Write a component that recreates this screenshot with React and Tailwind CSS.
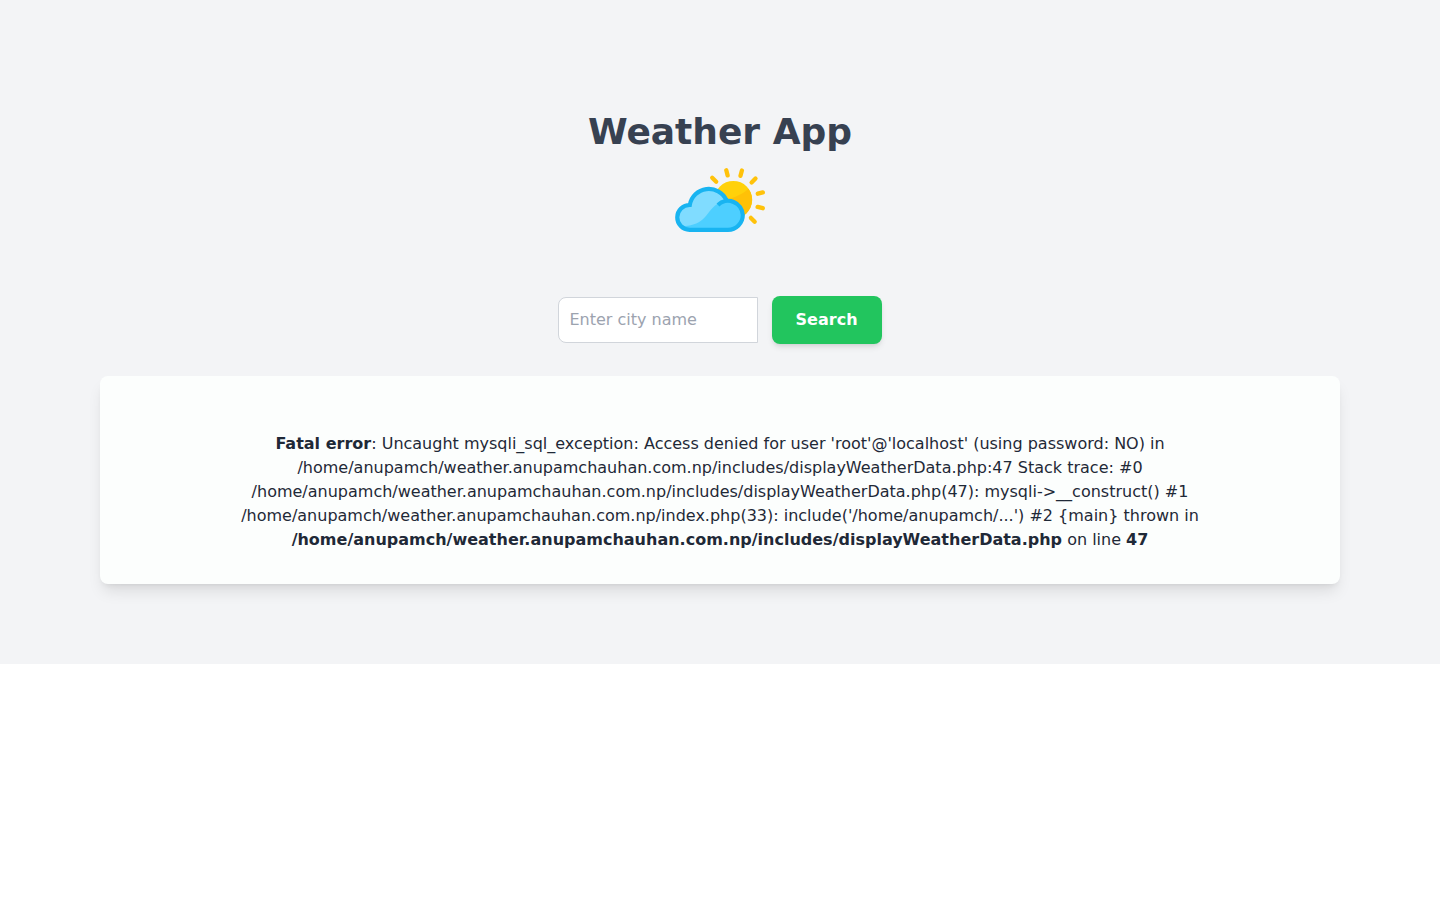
function WeatherIcon() {
  return (
    <svg
      className="w-[90px] h-16"
      viewBox="0 0 90 64"
      fill="none"
      role="img"
      aria-label="Partly cloudy"
    >
      <g stroke="#ffc20a" strokeWidth="4.3" strokeLinecap="round">
        <path d="M37.2 9.8 41.2 13.7" />
        <path d="M51.3 2.3 52.6 7.4" />
        <path d="M66.9 2.5 65.5 7.8" />
        <path d="M80.5 10.6 76.6 14.5" />
        <path d="M87.8 24.4 82.8 25.7" />
        <path d="M87.8 40.2 82.6 38.9" />
        <path d="M79.7 53.8 75.9 49.9" />
      </g>
      <circle cx="58.3" cy="31.8" r="18.9" fill="#ffd10a" />
      <path
        d="M73.5 20.7 Q67 27 54 31 L54 48 L67 48.5 A18.9 18.9 0 0 0 73.5 20.7Z"
        fill="#ffc107"
      />
      <path
        d="M14.5 61.8 A12.4 12.4 0 0 1 14.8 37 A19.3 19.3 0 0 1 51.6 32.2 A14.8 14.8 0 0 1 67.8 47 A14.8 14.8 0 0 1 53 61.8Z"
        fill="#4dcfff"
      />
      <path
        d="M6 58.5 C33 57 29 44 45 34 L51.6 32.2 A19.3 19.3 0 0 0 14.8 37 A12.4 12.4 0 0 0 6 58.5Z"
        fill="#80dcff"
      />
      <path
        d="M51.4 32.2 A19.3 19.3 0 0 0 14.8 37 A12.4 12.4 0 0 0 14.5 61.8 H53 A14.8 14.8 0 0 0 67.8 47 A14.7 14.7 0 0 0 43 36.9"
        stroke="#18b4f1"
        strokeWidth="4.2"
      />
    </svg>
  );
}

export default function App() {
  return (
    <main className="bg-[#f3f4f6] px-[100px] pt-28 pb-20 font-['DejaVu_Sans',sans-serif] text-base text-[#1f2937]">
      <header className="flex flex-col items-center gap-4">
        <h1 className="text-4xl font-bold text-[#374151]">Weather App</h1>
        <WeatherIcon />
      </header>
      <form
        className="mt-16 text-center"
        onSubmit={(event) => event.preventDefault()}
      >
        <input
          type="text"
          name="city"
          aria-label="City name"
          placeholder="Enter city name"
          className="mr-2 w-[200px] rounded-l-lg border border-[#d1d5db] bg-white p-2.5 placeholder:text-[#9ca3af]"
        />{" "}
        <button
          type="submit"
          className="rounded-lg bg-[#22c55e] px-6 py-3 font-bold text-white shadow-md"
        >
          Search
        </button>
      </form>
      <section className="mt-8 rounded-lg bg-[#fcfefd] px-8 pt-14 pb-8 text-center shadow-lg">
        <p>
          <b>Fatal error</b>: Uncaught mysqli_sql_exception: Access denied for
          user 'root'@'localhost' (using password: NO) in
          /home/anupamch/weather.anupamchauhan.com.np/includes/displayWeatherData.php:47
          Stack trace: #0
          /home/anupamch/weather.anupamchauhan.com.np/includes/displayWeatherData.php(47):
          mysqli-&gt;__construct() #1
          /home/anupamch/weather.anupamchauhan.com.np/index.php(33):
          include('/home/anupamch/...') #2 {"{main}"} thrown in{" "}
          <b>
            /home/anupamch/weather.anupamchauhan.com.np/includes/displayWeatherData.php
          </b>{" "}
          on line <b>47</b>
        </p>
      </section>
    </main>
  );
}
